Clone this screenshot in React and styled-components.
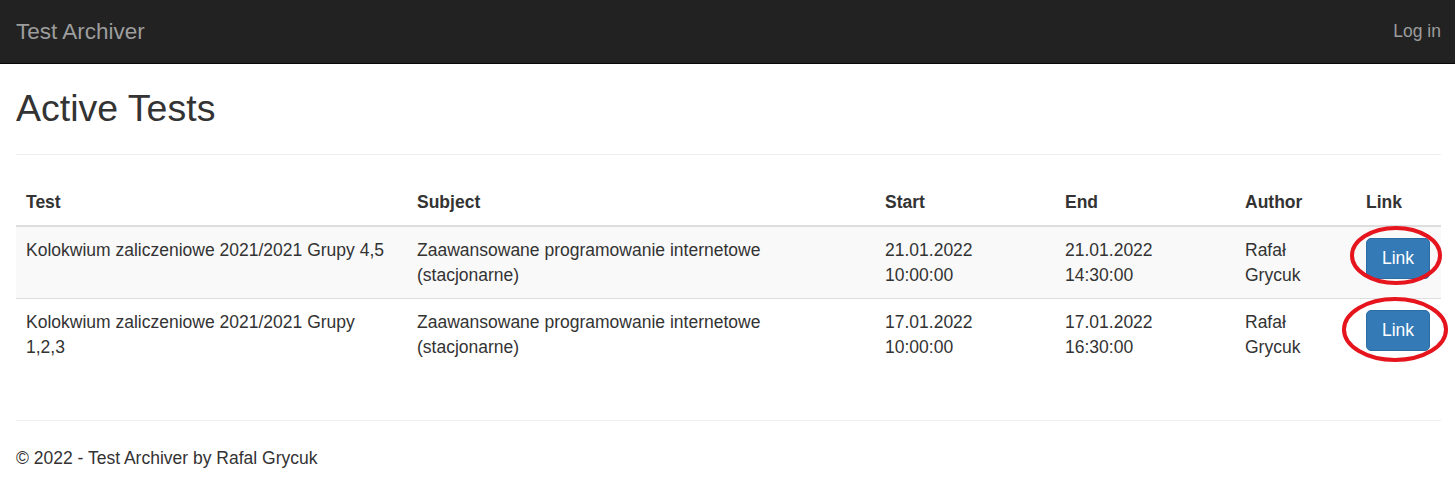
import React from "react";
import styled, { createGlobalStyle } from "styled-components";

const tests = [
    {
        id: 1,
        name: "Kolokwium zaliczeniowe 2021/2021 Grupy 4,5",
        subject: "Zaawansowane programowanie internetowe (stacjonarne)",
        start: "21.01.2022 10:00:00",
        end: "21.01.2022 14:30:00",
        author: "Rafał Grycuk",
        ring: { left: -8, top: -3, w: 96, h: 64, cx: 48, cy: 31.5, rx: 44, ry: 27.5 },
    },
    {
        id: 2,
        name: "Kolokwium zaliczeniowe 2021/2021 Grupy 1,2,3",
        subject: "Zaawansowane programowanie internetowe (stacjonarne)",
        start: "17.01.2022 10:00:00",
        end: "17.01.2022 16:30:00",
        author: "Rafał Grycuk",
        ring: { left: -16, top: -4, w: 110, h: 70, cx: 55, cy: 34.5, rx: 51, ry: 30.5 },
    },
];

function App() {
    return (
        <>
            <Global />
            <Navbar>
                <Brand>Test Archiver</Brand>
                <NavLink>Log in</NavLink>
            </Navbar>
            <Conteiner>
                <Titulo>Active Tests</Titulo>
                <Linha />
                <Tabela>
                    <colgroup>
                        <col style={{ width: 391 }} />
                        <col style={{ width: 468 }} />
                        <col style={{ width: 180 }} />
                        <col style={{ width: 180 }} />
                        <col style={{ width: 121 }} />
                        <col style={{ width: 85 }} />
                    </colgroup>
                    <thead>
                        <tr>
                            <Th>Test</Th>
                            <Th>Subject</Th>
                            <Th>Start</Th>
                            <Th>End</Th>
                            <Th>Author</Th>
                            <Th>Link</Th>
                        </tr>
                    </thead>
                    <tbody>
                        {tests.map((t, i) => (
                            <Tr key={t.id} listrado={i % 2 === 0}>
                                <Td>{t.name}</Td>
                                <Td>{t.subject}</Td>
                                <Td>{t.start}</Td>
                                <Td>{t.end}</Td>
                                <Td>{t.author}</Td>
                                <TdLink>
                                    <Botao>Link</Botao>
                                    <Circulo
                                        $left={t.ring.left}
                                        $top={t.ring.top}
                                        width={t.ring.w}
                                        height={t.ring.h}
                                        viewBox={`0 0 ${t.ring.w} ${t.ring.h}`}
                                    >
                                        <ellipse
                                            cx={t.ring.cx}
                                            cy={t.ring.cy}
                                            rx={t.ring.rx}
                                            ry={t.ring.ry}
                                            fill="none"
                                            stroke="#e5141d"
                                            strokeWidth="4"
                                        />
                                    </Circulo>
                                </TdLink>
                            </Tr>
                        ))}
                    </tbody>
                </Tabela>
                <Linha />
                <Rodape>© 2022 - Test Archiver by Rafal Grycuk</Rodape>
            </Conteiner>
        </>
    );
}

export default App;

const Global = createGlobalStyle`
body{
    margin:0;
    background:#fff;
    font-family: "Liberation Sans", Arial, sans-serif;
    font-size: 17.5px;
    line-height: 25px;
    color:#333;
}
`
const Navbar = styled.div`
height: 63px;
background:#222;
border-bottom: 1px solid #080808;
display:flex;
align-items:center;
justify-content:space-between;
padding: 0 14px 0 16px;
`
const Brand = styled.div`
font-size: 22.5px;
color:#9d9d9d;
`
const NavLink = styled.div`
font-size: 17.5px;
color:#9d9d9d;
`
const Conteiner = styled.div`
padding: 0 14px 0 16px;
`
const Titulo = styled.h1`
margin: 24px 0 0 0;
font-size: 37.5px;
font-weight: 400;
line-height: 41px;
`
const Linha = styled.hr`
margin: 25px 0;
border:0;
border-top: 1px solid #eee;
`
const Tabela = styled.table`
width: 100%;
margin-bottom: 50px;
table-layout: fixed;
border-collapse: collapse;
border-spacing: 0;
`
const Th = styled.th`
text-align:left;
font-weight:700;
vertical-align:bottom;
padding: 10px 14px 10px 10px;
border-bottom: 2px solid #ddd;
`
const Tr = styled.tr`
background: ${(props) => props.listrado ? "#f9f9f9" : "transparent"};
`
const Td = styled.td`
vertical-align:top;
padding: 10.5px 14px 10.5px 10px;
border-top: 1px solid #ddd;
`
const TdLink = styled(Td)`
position: relative;
white-space: nowrap;
`
const Botao = styled.button`
font-family: "Liberation Sans", Arial, sans-serif;
font-size: 17.5px;
line-height: 25px;
padding: 7px 15px;
color:#fff;
background:#337ab7;
border: 1px solid #2e6da4;
border-radius: 5px;
`
const Circulo = styled.svg`
position:absolute;
left: ${(props) => props.$left}px;
top: ${(props) => props.$top}px;
pointer-events:none;
overflow:visible;
`
const Rodape = styled.p`
margin:0;
`
